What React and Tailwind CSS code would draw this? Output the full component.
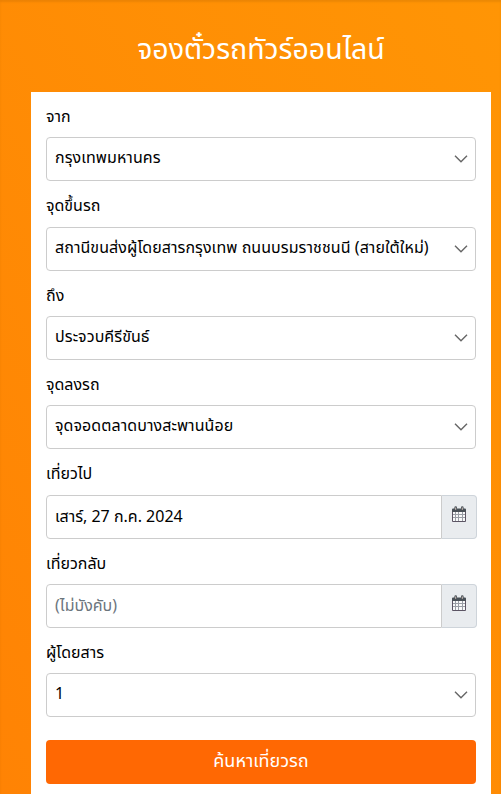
const fields = [
  { id: 'from', label: 'จาก', value: 'กรุงเทพมหานคร', type: 'select' },
  {
    id: 'pickup',
    label: 'จุดขึ้นรถ',
    value: 'สถานีขนส่งผู้โดยสารกรุงเทพ ถนนบรมราชชนนี (สายใต้ใหม่)',
    type: 'select',
  },
  { id: 'to', label: 'ถึง', value: 'ประจวบคีรีขันธ์', type: 'select' },
  { id: 'dropoff', label: 'จุดลงรถ', value: 'จุดจอดตลาดบางสะพานน้อย', type: 'select' },
  { id: 'depart', label: 'เที่ยวไป', value: 'เสาร์, 27 ก.ค. 2024', type: 'date' },
  { id: 'return', label: 'เที่ยวกลับ', placeholder: '(ไม่บังคับ)', type: 'date' },
  { id: 'passengers', label: 'ผู้โดยสาร', value: '1', type: 'select' },
]

function ChevronIcon() {
  return (
    <svg className="h-2 w-[14px] shrink-0" fill="none" viewBox="0 0 14 8">
      <path d="M1 0.8 L7 6.8 L13 0.8" stroke="#666" strokeWidth="1.4" />
    </svg>
  )
}

function CalendarIcon() {
  return (
    <svg className="h-4 w-[14px]" viewBox="0 0 14 16">
      <rect fill="#f8f9fa" height="10" width="13" x="0.5" y="5" />
      <path
        d="M3.5 5v10M6.5 5v10M10.5 5v10M1 8.5h12M1 11.5h12"
        fill="none"
        stroke="#9a9ea6"
      />
      <path d="M0.500 5v10.500h13V5" fill="none" stroke="#5c5564" />
      <path d="M1 2.500h12a1 1 0 0 1 1 1V6H0V3.500a1 1 0 0 1 1-1z" fill="#495057" />
      <path
        d="M3.700 1.500v2.300M10.300 1.500v2.300"
        stroke="#495057"
        strokeLinecap="round"
        strokeWidth="2.600"
      />
      <path d="M3.700 1.500v2.300M10.300 1.500v2.300" stroke="#d5c5be" strokeWidth="1" />
    </svg>
  )
}

function SelectField({ id, value }) {
  return (
    <button
      className="flex h-11 w-full items-center justify-between rounded border border-[#ccc] bg-white pr-[7px] pl-2 text-left"
      id={id}
      type="button"
    >
      <span className="pb-0.5 tracking-[0.07px] whitespace-nowrap">{value}</span>
      <ChevronIcon />
    </button>
  )
}

function DateField({ id, placeholder, value }) {
  return (
    <div className="-mr-px flex h-11">
      <input
        className="min-w-0 flex-1 rounded-l border border-[#ccc] bg-white pl-2 outline-none placeholder:text-[#6c757d]"
        defaultValue={value}
        id={id}
        placeholder={placeholder}
        type="text"
      />
      <button
        className="flex w-[35px] justify-center rounded-r border border-l-0 border-[#ced4da] bg-[#e9ecef] pt-[10px]"
        type="button"
      >
        <CalendarIcon />
      </button>
    </div>
  )
}

export default function App() {
  return (
    <main className="min-h-[794px] bg-linear-to-tr from-[#ff8304] to-[#ff9505] pr-[10px] pl-[31px] font-['Noto_Sans_Thai','Noto_Sans',sans-serif] text-[16px] leading-6 text-black shadow-[inset_0_2px_2px_rgba(0,0,0,0.08)]">
      <h1 className="flex h-[92px] items-center justify-center pt-[9px] text-[28.5px] leading-10 text-white">
        จองตั๋วรถทัวร์ออนไลน์
      </h1>
      <form className="h-[702px] bg-white px-[15px]">
        {fields.map((field) => (
          <div className="h-[89.36px] pt-[13px]" key={field.id}>
            <label className="mb-[8.2px] block" htmlFor={field.id}>
              {field.label}
            </label>
            {field.type === 'select' ? <SelectField {...field} /> : <DateField {...field} />}
          </div>
        ))}
        <button
          className="mt-[22.5px] h-11 w-full rounded bg-[#ff6803] text-[18px] text-white"
          type="button"
        >
          ค้นหาเที่ยวรถ
        </button>
      </form>
    </main>
  )
}
